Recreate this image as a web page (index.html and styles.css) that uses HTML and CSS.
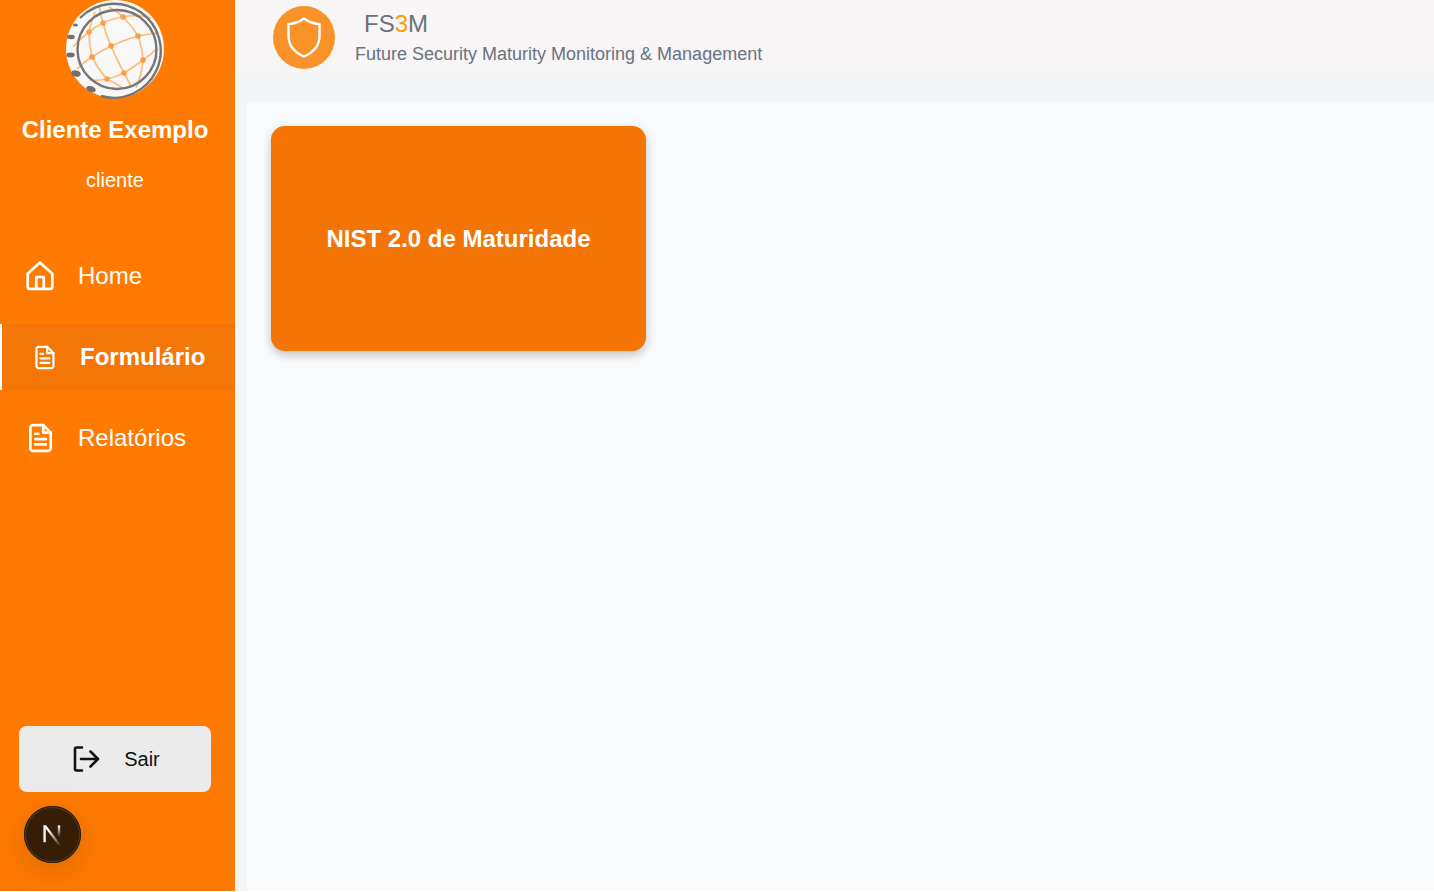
FILE: index.html
```html
<!DOCTYPE html>
<html lang="pt-BR">
<head>
  <meta charset="UTF-8">
  <meta name="viewport" content="width=device-width, initial-scale=1">
  <title>FS3M</title>
  <link rel="stylesheet" href="styles.css">
</head>
<body>
  <div class="app">
    <aside class="sidebar">
      <div class="client">
        <svg class="client-logo" viewBox="0 0 100 100" aria-hidden="true">
          <circle cx="50" cy="49" r="49" fill="#f8f8f8"/>
          <g fill="none" stroke="#fbbd7c" stroke-width="1.700">
            <path d="M86 18 Q70 14 58 17 Q46 19 38 23 Q30 27 24 32 Q15 39 8 47"/>
            <path d="M44 7 Q52 11 58 17 Q67 26 73 36 Q77 47 78 60 Q77 74 71 88"/>
            <path d="M34 6 Q36 15 38 23 Q41 35 46 46 Q52 60 59 73 L66 86"/>
            <path d="M30 12 Q26 22 24 32 Q24 45 27 57 Q33 69 42 79"/>
            <path d="M94 33 Q83 34 73 36 Q59 40 46 46 Q36 51 27 57 Q19 62 12 69"/>
            <path d="M92 48 Q86 55 78 60 Q69 67 59 73 Q51 77 42 79 Q33 81 24 80"/>
            <path d="M42 79 Q50 83 58 88"/>
          </g>
          <circle cx="52" cy="49.500" r="39.500" fill="none" stroke="#757575" stroke-width="2.400"/>
          <path d="M15 18 A47 47 0 1 1 36 96" fill="none" stroke="#757575" stroke-width="2.400"/>
          <g fill="#fb9f42">
            <circle cx="58" cy="17" r="2.800"/>
            <circle cx="38" cy="23" r="2.800"/>
            <circle cx="24" cy="32" r="2.800"/>
            <circle cx="73" cy="36" r="2.800"/>
            <circle cx="46" cy="46" r="2.800"/>
            <circle cx="27" cy="57" r="2.800"/>
            <circle cx="78" cy="60" r="2.800"/>
            <circle cx="59" cy="73" r="2.800"/>
            <circle cx="42" cy="79" r="2.800"/>
          </g>
          <g fill="#6f6f6f">
            <ellipse cx="10.500" cy="25" rx="2.400" ry="1.500"/>
            <ellipse cx="6" cy="37" rx="3.800" ry="2.200"/>
            <ellipse cx="5.500" cy="55" rx="4.200" ry="2.400"/>
            <ellipse cx="11" cy="73.500" rx="4.800" ry="3" transform="rotate(15 11 73.500)"/>
            <ellipse cx="26" cy="89" rx="4.800" ry="2.800" transform="rotate(20 26 89)"/>
          </g>
        </svg>
        <div class="client-name">Cliente Exemplo</div>
        <div class="client-role">cliente</div>
      </div>

      <nav class="nav">
        <a class="nav-item" href="#">
          <svg class="nav-icon" viewBox="0 0 28 28" aria-hidden="true">
            <path d="M2.500 12 L14 1.500 L25.500 12 V24 a2 2 0 0 1 -2 2 H4.500 A2 2 0 0 1 2.500 24 Z"/>
            <path d="M10.500 26 V15 H17.500 V26"/>
          </svg>
          <span>Home</span>
        </a>
        <a class="nav-item nav-item-active" href="#">
          <svg class="nav-icon nav-icon-small" viewBox="0 0 28 28" aria-hidden="true">
            <path d="M5 4.500 A2.500 2.500 0 0 1 7.500 2 H17 L24 9 V23.500 A2.500 2.500 0 0 1 21.500 26 H7.500 A2.500 2.500 0 0 1 5 23.500 Z"/>
            <path d="M17 2 V9 H24 M9.500 10 H12.500 M9.500 15 H19.500 M9.500 20 H19.500"/>
          </svg>
          <span>Formulário</span>
        </a>
        <a class="nav-item" href="#">
          <svg class="nav-icon" viewBox="0 0 28 28" aria-hidden="true">
            <path d="M5 4.500 A2.500 2.500 0 0 1 7.500 2 H17 L24 9 V23.500 A2.500 2.500 0 0 1 21.500 26 H7.500 A2.500 2.500 0 0 1 5 23.500 Z"/>
            <path d="M17 2 V9 H24 M9.500 10 H12.500 M9.500 15 H19.500 M9.500 20 H19.500"/>
          </svg>
          <span>Relatórios</span>
        </a>
      </nav>

      <div class="sidebar-bottom">
        <button class="logout" type="button">
          <svg class="logout-icon" viewBox="0 0 28 28" aria-hidden="true">
            <path d="M10 2.500 H4.500 A1.500 1.500 0 0 0 3 4 V24 A1.500 1.500 0 0 0 4.500 25.500 H10"/>
            <path d="M9 14 H26 M18.500 6.500 L26 14 L18.500 21.500"/>
          </svg>
          <span>Sair</span>
        </button>
        <div class="dev-badge">
          <svg viewBox="0 0 20 20" aria-label="Next.js">
            <defs>
              <linearGradient id="nDiag" x1="0" y1="0" x2="1" y2="1">
                <stop offset="0.300" stop-color="#fff"/>
                <stop offset="1" stop-color="#fff" stop-opacity="0"/>
              </linearGradient>
              <linearGradient id="nRight" x1="0" y1="0" x2="0" y2="1">
                <stop offset="0" stop-color="#fff"/>
                <stop offset="0.800" stop-color="#fff" stop-opacity="0"/>
              </linearGradient>
            </defs>
            <rect x="2" y="2" width="2" height="14" fill="#f6f2ee"/>
            <polygon points="2,2 4.400,2 17,19 14.800,19" fill="url(#nDiag)"/>
            <rect x="14" y="2" width="2" height="12" fill="url(#nRight)"/>
          </svg>
        </div>
      </div>
    </aside>

    <div class="main">
      <header class="topbar">
        <div class="brand-badge">
          <svg viewBox="0 0 34 41" aria-hidden="true">
            <path d="M17 1.500 C12.500 5 7 6.800 1.500 7.200 V19 C1.500 28.500 8 35.500 17 39.500 C26 35.500 32.500 28.500 32.500 19 V7.200 C27 6.800 21.500 5 17 1.500 Z"/>
          </svg>
        </div>
        <div class="brand-text">
          <div class="brand-name">FS<span class="brand-three">3</span>M</div>
          <div class="brand-sub">Future Security Maturity Monitoring &amp; Management</div>
        </div>
      </header>

      <main class="content">
        <a class="form-card" href="#">NIST 2.0 de Maturidade</a>
      </main>
    </div>
  </div>
</body>
</html>
```

FILE: styles.css
```css
/* Global */
*, *::before, *::after { box-sizing: border-box; }
html, body { height: 100%; }
body {
  margin: 0;
  background: #fff;
  font-family: "Liberation Sans", Arial, sans-serif;
  overflow: hidden;
}
.app {
  display: flex;
  height: calc(100vh - 1px);
}

/* Sidebar */
.sidebar {
  display: flex;
  flex-direction: column;
  flex: 0 0 235px;
  background: #ff7a00;
  color: #fff;
}
.client {
  display: flex;
  flex-direction: column;
  align-items: center;
  width: 230px;
}
.client-logo {
  display: block;
  width: 100px;
  height: 100px;
}
.client-name {
  margin-top: 16px;
  font-size: 24px;
  line-height: 28px;
  font-weight: 700;
}
.client-role {
  margin-top: 24px;
  font-size: 20px;
  line-height: 24px;
}

.nav {
  display: flex;
  flex-direction: column;
  gap: 15px;
  margin-top: 51px;
}
.nav-item {
  display: flex;
  align-items: center;
  gap: 23px;
  height: 66px;
  padding-left: 25px;
  color: #fff;
  font-size: 24px;
  text-decoration: none;
}
.nav-icon {
  flex: 0 0 30px;
  width: 30px;
  height: 30px;
  fill: none;
  stroke: #fff;
  stroke-width: 2.500;
  stroke-linecap: round;
  stroke-linejoin: round;
}
.nav-icon-small {
  flex-basis: 25px;
  width: 25px;
  height: 25px;
}
.nav-item-active {
  padding-left: 30px;
  border-left: 2px solid #fff;
  background: #f37606;
  font-weight: 700;
}

.sidebar-bottom {
  margin-top: auto;
  padding: 0 24px 28px 19px;
}
.logout {
  display: flex;
  align-items: center;
  justify-content: center;
  gap: 24px;
  width: 192px;
  height: 66px;
  padding-left: 8px;
  border: 0;
  border-radius: 8px;
  background: #ebebeb;
  color: #111;
  font: 20px "Liberation Sans", Arial, sans-serif;
}
.logout-icon {
  width: 28px;
  height: 28px;
  fill: none;
  stroke: #111;
  stroke-width: 2.600;
  stroke-linecap: round;
  stroke-linejoin: round;
}
.dev-badge {
  display: flex;
  align-items: center;
  justify-content: center;
  width: 57px;
  height: 57px;
  margin: 14px 0 0 5px;
  border: 2px solid #4f3a26;
  outline: 1px solid #2a1708;
  outline-offset: -1px;
  border-radius: 50%;
  background: #361d06;
  box-shadow: 0 8px 30px rgba(170, 85, 0, 0.45);
}
.dev-badge svg {
  width: 24px;
  height: 24px;
}

/* Main area */
.main {
  display: flex;
  flex-direction: column;
  flex: 1 1 auto;
  min-width: 0;
  background: #f3f4f6;
}
.topbar {
  display: flex;
  flex: 0 0 78px;
  padding: 6px 0 0 38px;
  background: linear-gradient(#f7f5f5 92%, #f4f4f5);
}
.brand-badge {
  display: flex;
  align-items: center;
  justify-content: center;
  flex: 0 0 62px;
  height: 63px;
  border-radius: 50%;
  background: #f99329;
}
.brand-badge svg {
  width: 34px;
  height: 41px;
  fill: none;
  stroke: #fff;
  stroke-width: 2.400;
  stroke-linejoin: round;
}
.brand-text { margin: 4px 0 0 20px; }
.brand-name {
  padding-left: 9px;
  color: #6b7280;
  font-size: 24px;
  line-height: 28px;
}
.brand-three { color: #f59e0b; }
.brand-sub {
  margin-top: 4px;
  color: #6b7280;
  font-size: 18px;
  line-height: 24px;
}

.content {
  flex: 1 1 auto;
  margin: 24px 0 0 12px;
  padding: 24px;
  background: #f9fafb;
}
.form-card {
  display: flex;
  align-items: center;
  justify-content: center;
  width: 375px;
  height: 225px;
  border-radius: 14px;
  background: #f47405;
  box-shadow: 0 4px 10px rgba(0, 0, 0, 0.22);
  color: #fff;
  font-size: 24px;
  font-weight: 700;
  text-decoration: none;
}
```
